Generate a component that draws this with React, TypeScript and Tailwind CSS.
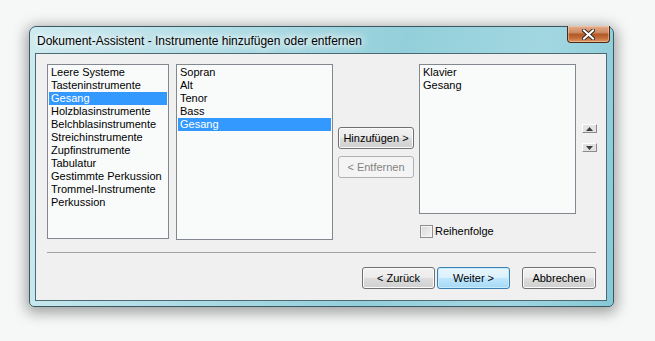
import React from 'react';

const firstList = [
    'Leere Systeme',
    'Tasteninstrumente',
    'Gesang',
    'Holzblasinstrumente',
    'Belchblasinstrumente',
    'Streichinstrumente',
    'Zupfinstrumente',
    'Tabulatur',
    'Gestimmte Perkussion',
    'Trommel-Instrumente',
    'Perkussion',
];

const secondList = ['Sopran', 'Alt', 'Tenor', 'Bass', 'Gesang'];
const chosenList = ['Klavier', 'Gesang'];

function ListBox({ items, selected, className }: { items: string[]; selected?: string; className: string }) {
    return (
        <div className={`border border-[#828790] bg-[#f9fbfb] p-[1px] ${className}`}>
            {items.map((item, i) => (
                <div
                    key={i}
                    className={`h-[13px] px-[2px] text-[11px] leading-[13px] whitespace-nowrap ${item === selected ? 'bg-[#3399ff] text-white' : 'text-black'}`}
                >
                    {item}
                </div>
            ))}
        </div>
    );
}

// Vista style push button
function PushButton({ label, width, variant = 'normal' }: { label: string; width: string; variant?: 'normal' | 'default' | 'disabled' }) {
    const look =
        variant === 'default'
            ? 'border-[#3c7fb1] bg-[linear-gradient(to_bottom,#eaf6fd_0%,#d9f0fc_50%,#bee6fd_50%,#a7d9f5_100%)] text-black shadow-[inset_0_0_0_1px_#c8ecff]'
            : variant === 'disabled'
                ? 'border-[#adb2b5] bg-[#f4f4f4] text-[#838383]'
                : 'border-[#707070] bg-[linear-gradient(to_bottom,#f2f2f2_0%,#ebebeb_50%,#dddddd_50%,#cfcfcf_100%)] text-black shadow-[inset_0_0_0_1px_#fbfbfb]';
    return (
        <div className={`flex h-[22px] items-center justify-center rounded-[3px] border text-[11px] leading-[13px] ${width} ${look}`}>
            {label}
        </div>
    );
}

function ArrowButton({ up }: { up?: boolean }) {
    return (
        <div className="flex h-[9px] w-[15px] items-center justify-center border-t border-l border-t-[#ffffff] border-l-[#ffffff] border-b border-r border-b-[#8a8a8a] border-r-[#8a8a8a] bg-[#e2e2e2]">
            <svg width="7" height="4" viewBox="0 0 7 4">
                {up ? <polygon points="3.5,0 7,4 0,4" fill="#3c3c3c" /> : <polygon points="0,0 7,0 3.5,4" fill="#3c3c3c" />}
            </svg>
        </div>
    );
}

export default function App() {
    return (
        <div className="h-[341px] w-[655px] bg-[#f6f8f8] pl-[29px] pt-[26px] font-['Liberation_Sans',Arial,sans-serif]">
            <div className="flex h-[281px] w-[585px] flex-col rounded-t-[7px] rounded-b-[5px] border border-[#3b5862] bg-[linear-gradient(100deg,#cdebf0_0%,#b0dde6_30%,#93cfda_60%,#a2d7e1_82%,#86c9d7_100%)] shadow-[0_3px_14px_3px_rgba(0,0,0,0.35)]">
                {/* Title bar */}
                <div className="flex h-[26px] items-start">
                    <span className="ml-[7px] mt-[7px] text-[12px] leading-[14px] text-black [text-shadow:0_0_6px_#ffffff,0_0_10px_#ffffff,0_0_14px_#ffffff]">
                        Dokument-Assistent - Instrumente hinzufügen oder entfernen
                    </span>
                    <div className="-mt-[1px] ml-auto mr-[3px] flex h-[17px] w-[43px] items-center justify-center rounded-b-[4px] border border-t-0 border-[#4b2a1a] bg-[linear-gradient(to_bottom,#e2ae8e_0%,#cf8c62_40%,#b35a28_52%,#c36c38_75%,#dc9a68_100%)] shadow-[inset_0_0_0_1px_rgba(255,220,190,0.45)]">
                        <svg width="13" height="11" viewBox="0 0 13 11">
                            <path d="M2 1.5 L11 9.5 M11 1.5 L2 9.5" stroke="#3a2a22" strokeWidth="4" strokeLinecap="square" />
                            <path d="M2 1.5 L11 9.5 M11 1.5 L2 9.5" stroke="#ffffff" strokeWidth="2" strokeLinecap="square" />
                        </svg>
                    </div>
                </div>

                {/* Client area */}
                <div className="mb-[5px] ml-[5px] mr-[6px] flex-1 border border-[#4d6a74] bg-[#f0f0f0] pl-[11px] pt-[10px]">
                    <div className="flex items-start">
                        <ListBox items={firstList} selected="Gesang" className="h-[175px] w-[122px]" />
                        <ListBox items={secondList} selected="Gesang" className="ml-[7px] h-[176px] w-[157px]" />

                        <div className="ml-[5px] flex flex-col gap-[7px] pt-[63px]">
                            <PushButton label="Hinzufügen >" width="w-[76px]" />
                            <PushButton label="< Entfernen" width="w-[76px]" variant="disabled" />
                        </div>

                        <div className="ml-[5px] flex flex-col">
                            <ListBox items={chosenList} className="h-[150px] w-[157px]" />
                            <div className="ml-[1px] mt-[11px] flex items-center gap-[2px]">
                                <div className="h-[13px] w-[13px] border border-[#8f8f8f] bg-[linear-gradient(135deg,#d8d8d8_0%,#f4f4f4_100%)] shadow-[inset_0_0_0_1px_#f4f4f4]" />
                                <span className="text-[11px] leading-[13px] text-black">Reihenfolge</span>
                            </div>
                        </div>

                        <div className="ml-[6px] flex flex-col gap-[10px] pt-[60px]">
                            <ArrowButton up />
                            <ArrowButton />
                        </div>
                    </div>

                    {/* Separator */}
                    <div className="mt-[12px] h-[1px] w-[549px] bg-[#a0a0a0]" />

                    <div className="mt-[14px] flex w-[549px] justify-end">
                        <PushButton label="< Zurück" width="w-[73px]" />
                        <div className="ml-[2px]">
                            <PushButton label="Weiter >" width="w-[73px]" variant="default" />
                        </div>
                        <div className="ml-[12px]">
                            <PushButton label="Abbrechen" width="w-[74px]" />
                        </div>
                    </div>
                </div>
            </div>
        </div>
    );
}
